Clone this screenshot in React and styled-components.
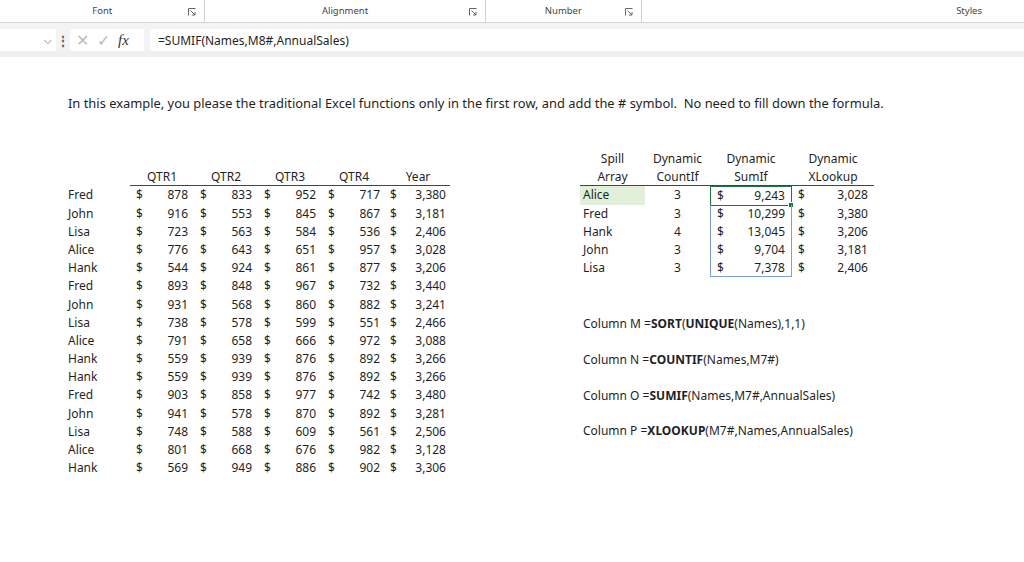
import React from "react"
import styled, { createGlobalStyle } from "styled-components"

const Global = createGlobalStyle`
  html, body { margin: 0; background: #fff; }
  body { font-family: "Noto Sans", "Liberation Sans", sans-serif; color: #1f1f1f; }
`

const Page = styled.div`
  width: 1024px;
  height: 562px;
  overflow: hidden;
  background: #fff;
`

const Ribbon = styled.div`
  height: 22px;
  display: flex;
  font-size: 9.5px;
  color: #444;
  border-bottom: 1px solid #d6d6d6;
  box-shadow: 0 2px 3px rgba(0,0,0,0.08);
`

const Group = styled.div`
  width: ${p => p.w}px;
  position: relative;
  text-align: center;
  line-height: 22px;
  border-right: ${p => (p.sep ? "1px solid #d0d0d0" : "none")};
`

const Launcher = styled.svg`
  position: absolute;
  right: 8px;
  top: 8px;
`

const LaunchIcon = () => (
  <Launcher width="8" height="8" viewBox="0 0 8 8" fill="none" stroke="#666" strokeWidth="1">
    <path d="M0.5 7.5V0.5H7.5" />
    <path d="M2.5 2.5L7 7M7 4V7H4" />
  </Launcher>
)

const Gap = styled.div`
  height: 6px;
  background: #f3f3f3;
`

const FormulaBar = styled.div`
  height: 22px;
  display: flex;
  align-items: center;
  background: #f3f3f3;
  font-size: 12px;
`

const NameBox = styled.div`
  width: 52px;
  height: 22px;
  background: #fff;
  display: flex;
  align-items: center;
  justify-content: flex-end;
  padding-right: 4px;
  color: #555;
  font-size: 10px;
`

const Dots = styled.div`
  width: 14px;
  text-align: center;
  color: #555;
  font-weight: bold;
`

const Buttons = styled.div`
  width: 68px;
  height: 22px;
  background: #fff;
  display: flex;
  align-items: center;
  gap: 8px;
  padding-left: 6px;
  color: #bbb;
  font-size: 16px;
`

const Fx = styled.span`
  font-family: "Liberation Serif", serif;
  font-style: italic;
  color: #333;
  font-size: 15px;
`

const Input = styled.div`
  flex: 1;
  height: 22px;
  margin-left: 6px;
  background: #fff;
  display: flex;
  align-items: center;
  padding-left: 8px;
`

const Sheet = styled.div`
  border-top: 6px solid #f0f0f0;
  padding: 38px 0 0 68px;
  font-size: 12px;
`

const Intro = styled.div`
  height: 16px;
  line-height: 16px;
  font-size: 12.9px;
`

const Tables = styled.div`
  margin-top: 39px;
  display: flex;
`

const Grid = styled.div`
  display: grid;
  grid-template-columns: ${p => p.cols};
  grid-auto-rows: 18.2px;
  align-items: center;
  line-height: 18px;
`

const Cell = styled.div`
  text-align: ${p => p.align || "left"};
  padding: 0 ${p => p.pad || 0}px;
  background: ${p => (p.hl ? "#e2efda" : "transparent")};
  height: 18.2px;
  box-sizing: border-box;
  border-bottom: ${p => (p.line ? "1px solid #444" : "none")};
  white-space: nowrap;
  position: relative;
  ${p => p.box && `
    border-left: 1px solid #7f9fd8;
    border-right: 1px solid #7f9fd8;
    ${p.box === "top" ? "border-top: 1px solid #7f9fd8;" : ""}
    ${p.box === "bottom" ? "border-bottom: 1px solid #7f9fd8;" : ""}
  `}
`

const Money = styled(Cell)`
  display: flex;
  justify-content: space-between;
`

const Sel = styled.div`
  position: absolute;
  inset: -1px;
  border: 1.5px solid #217346;
`

const Handle = styled.span`
  position: absolute;
  right: -3px;
  bottom: -3px;
  width: 4px;
  height: 4px;
  background: #217346;
  border: 1px solid #fff;
`

const Notes = styled.div`
  margin-top: 38px;
  display: flex;
  flex-direction: column;
  gap: 18.6px;
  padding-left: 3px;
`

const data = [
  ["Fred", 878, 833, 952, 717, "3,380"],
  ["John", 916, 553, 845, 867, "3,181"],
  ["Lisa", 723, 563, 584, 536, "2,406"],
  ["Alice", 776, 643, 651, 957, "3,028"],
  ["Hank", 544, 924, 861, 877, "3,206"],
  ["Fred", 893, 848, 967, 732, "3,440"],
  ["John", 931, 568, 860, 882, "3,241"],
  ["Lisa", 738, 578, 599, 551, "2,466"],
  ["Alice", 791, 658, 666, 972, "3,088"],
  ["Hank", 559, 939, 876, 892, "3,266"],
  ["Hank", 559, 939, 876, 892, "3,266"],
  ["Fred", 903, 858, 977, 742, "3,480"],
  ["John", 941, 578, 870, 892, "3,281"],
  ["Lisa", 748, 588, 609, 561, "2,506"],
  ["Alice", 801, 668, 676, 982, "3,128"],
  ["Hank", 569, 949, 886, 902, "3,306"],
]

const summary = [
  ["Alice", 3, "9,243", "3,028"],
  ["Fred", 3, "10,299", "3,380"],
  ["Hank", 4, "13,045", "3,206"],
  ["John", 3, "9,704", "3,181"],
  ["Lisa", 3, "7,378", "2,406"],
]

const heads = [["Spill", "Array"], ["Dynamic", "CountIf"], ["Dynamic", "SumIf"], ["Dynamic", "XLookup"]]

const SalesTable = () => (
  <Grid cols="62px repeat(5, 64px)">
    {[0, 1, 2, 3, 4, 5].map(i => <Cell key={i} />)}
    <Cell />
    {["QTR1", "QTR2", "QTR3", "QTR4", "Year"].map(h => (
      <Cell key={h} align="center" line>{h}</Cell>
    ))}
    {data.map((r, i) => (
      <React.Fragment key={i}>
        <Cell>{r[0]}</Cell>
        {r.slice(1).map((v, j) => (
          <Money key={j} pad={j === 4 ? 4 : 6}>
            <span>$</span>
            <span>{v}</span>
          </Money>
        ))}
      </React.Fragment>
    ))}
  </Grid>
)

const SummaryTable = () => (
  <Grid cols="65px 65px 82px 82px">
    {heads.map(h => <Cell key={h[1]} align="center">{h[0]}</Cell>)}
    {heads.map(h => <Cell key={h[1] + "2"} align="center" line>{h[1]}</Cell>)}
    {summary.map((r, i) => {
      const edge = i === 0 ? "top" : i === summary.length - 1 ? "bottom" : "mid"
      return (
        <React.Fragment key={r[0]}>
          <Cell pad={3} hl={i === 0}>{r[0]}</Cell>
          <Cell align="center">{r[1]}</Cell>
          <Money pad={6} box={edge}>
            <span>$</span>
            <span>{r[2]}</span>
            {i === 0 && <Sel><Handle /></Sel>}
          </Money>
          <Money pad={6}>
            <span>$</span>
            <span>{r[3]}</span>
          </Money>
        </React.Fragment>
      )
    })}
  </Grid>
)

export default function App() {
  return (
    <Page>
      <Global />
      <Ribbon>
        <Group w={205} sep>Font<LaunchIcon /></Group>
        <Group w={280} sep>Alignment<LaunchIcon /></Group>
        <Group w={156} sep>Number<LaunchIcon /></Group>
        <Group w={383}>
          <span style={{ position: "absolute", right: 42 }}>Styles</span>
        </Group>
      </Ribbon>
      <Gap />
      <FormulaBar>
        <NameBox>⌵</NameBox>
        <Dots>⋮</Dots>
        <Buttons>
          <span>✕</span>
          <span>✓</span>
          <Fx>fx</Fx>
        </Buttons>
        <Input>=SUMIF(Names,M8#,AnnualSales)</Input>
      </FormulaBar>
      <Sheet>
        <Intro>
          In this example, you please the traditional Excel functions only in the first row, and add the # symbol.&nbsp; No need to fill down the formula.
        </Intro>
        <Tables>
          <SalesTable />
          <div style={{ marginLeft: 130 }}>
            <SummaryTable />
            <Notes>
              <div>Column M =<b>SORT</b>(<b>UNIQUE</b>(Names),1,1)</div>
              <div>Column N =<b>COUNTIF</b>(Names,M7#)</div>
              <div>Column O =<b>SUMIF</b>(Names,M7#,AnnualSales)</div>
              <div>Column P =<b>XLOOKUP</b>(M7#,Names,AnnualSales)</div>
            </Notes>
          </div>
        </Tables>
      </Sheet>
    </Page>
  )
}
